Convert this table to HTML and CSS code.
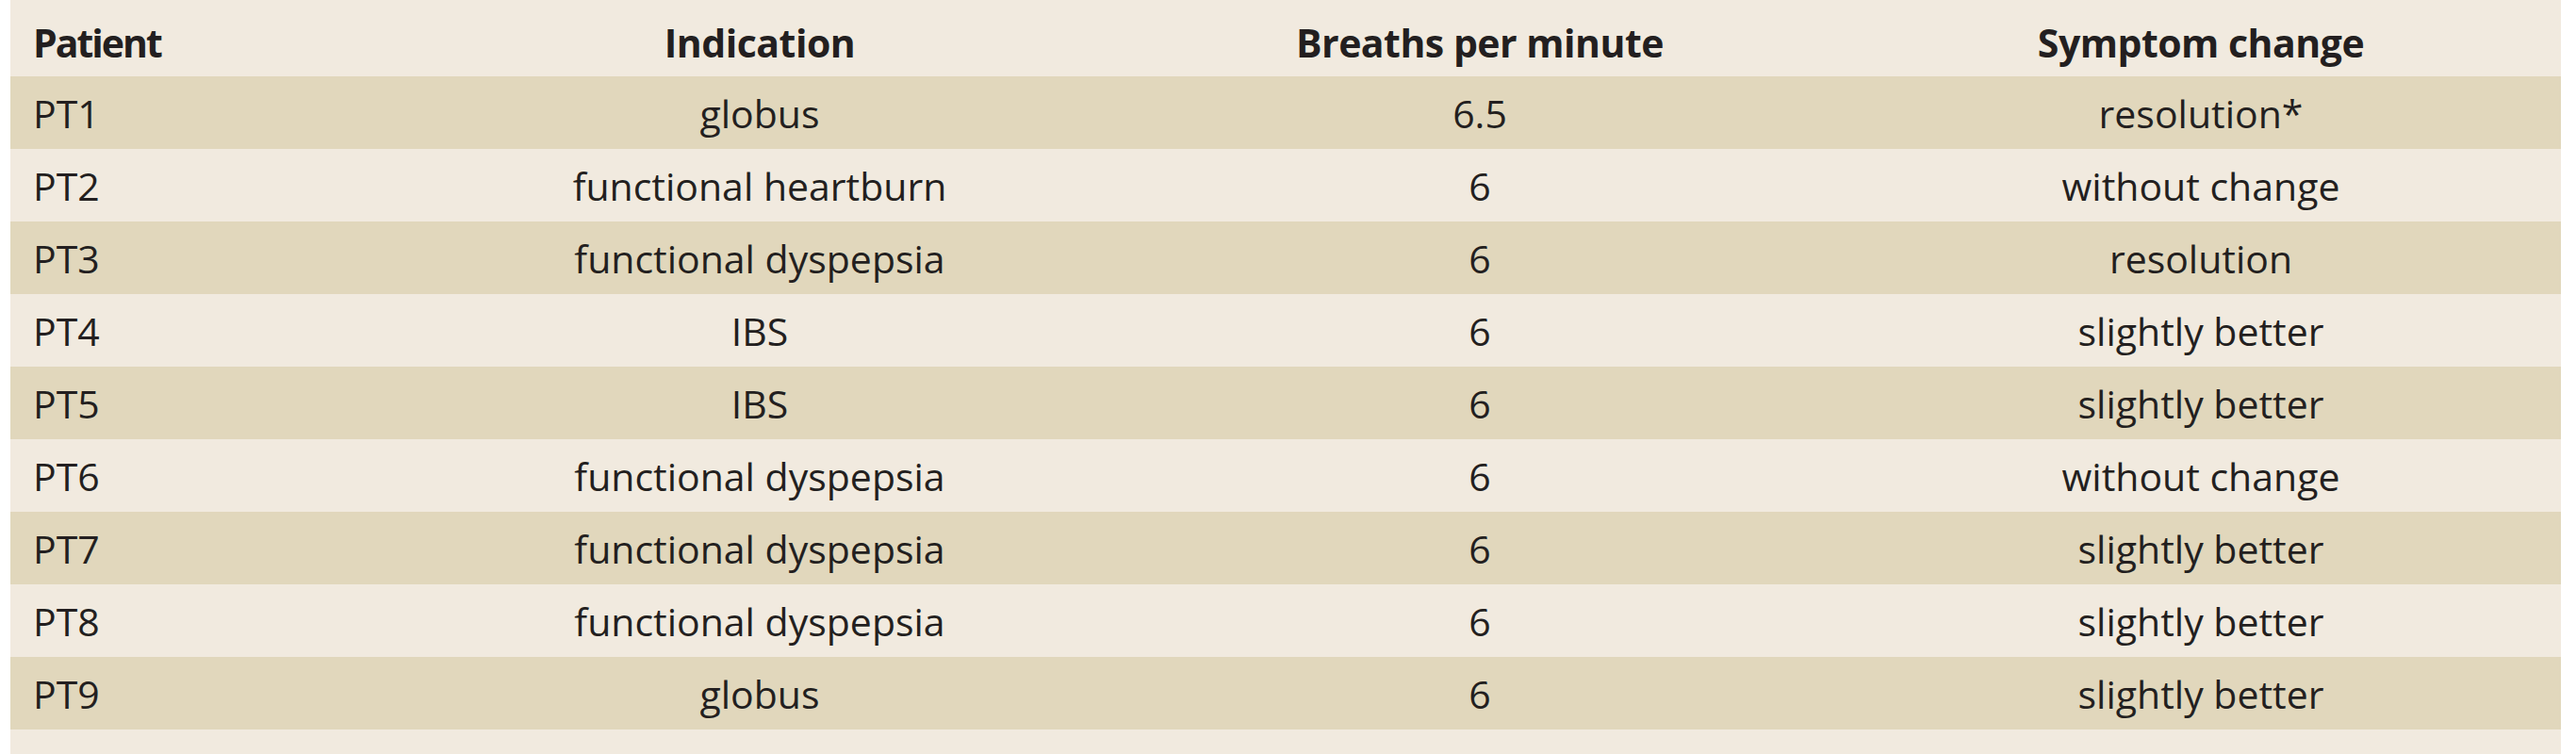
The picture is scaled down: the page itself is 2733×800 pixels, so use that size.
FILE: index.html
```html
<!DOCTYPE html>
<html lang="en">
<head>
<meta charset="utf-8">
<title>Breathing table</title>
<link rel="stylesheet" href="styles.css">
</head>
<body>
<div class="sheet">
  <table class="data">
    <colgroup>
      <col class="c-patient">
      <col class="c-ind">
      <col class="c-bpm">
      <col class="c-sym">
    </colgroup>
    <thead>
      <tr>
        <th class="left">Patient</th>
        <th>Indication</th>
        <th>Breaths per minute</th>
        <th>Symptom change</th>
      </tr>
    </thead>
    <tbody>
      <tr class="shade"><td class="left">PT1</td><td>globus</td><td>6.5</td><td>resolution*</td></tr>
      <tr><td class="left">PT2</td><td>functional heartburn</td><td>6</td><td>without change</td></tr>
      <tr class="shade"><td class="left">PT3</td><td>functional dyspepsia</td><td>6</td><td>resolution</td></tr>
      <tr><td class="left">PT4</td><td>IBS</td><td>6</td><td>slightly better</td></tr>
      <tr class="shade"><td class="left">PT5</td><td>IBS</td><td>6</td><td>slightly better</td></tr>
      <tr><td class="left">PT6</td><td>functional dyspepsia</td><td>6</td><td>without change</td></tr>
      <tr class="shade"><td class="left">PT7</td><td>functional dyspepsia</td><td>6</td><td>slightly better</td></tr>
      <tr><td class="left">PT8</td><td>functional dyspepsia</td><td>6</td><td>slightly better</td></tr>
      <tr class="shade"><td class="left">PT9</td><td>globus</td><td>6</td><td>slightly better</td></tr>
    </tbody>
  </table>
  <div class="tail"></div>
</div>
</body>
</html>
```
FILE: styles.css
```css
html, body {
  margin: 0;
  padding: 0;
  background: #ffffff;
}

body {
  font-family: "Open Sans", "Noto Sans", sans-serif;
  color: #231f20;
}

.sheet {
  margin-left: 11px;
  width: 2706px;
  background: #f1eadf;
}

.data {
  width: 100%;
  border-collapse: collapse;
  table-layout: fixed;
}

.c-patient { width: 414px; }
.c-ind { width: 762px; }
.c-bpm { width: 766px; }
.c-sym { width: 764px; }

.data th,
.data td {
  padding: 0;
  text-align: center;
  font-size: 41px;
  white-space: nowrap;
}

.data th {
  height: 81px;
  font-weight: 700;
  vertical-align: middle;
  padding-top: 8px;
  box-sizing: border-box;
  letter-spacing: -0.5px;
}

.data th.left {
  letter-spacing: -2px;
}

.data td {
  height: 77px;
  font-weight: 400;
  vertical-align: middle;
}

.data .left {
  text-align: left;
  padding-left: 24px;
}

.data tr.shade td {
  background: #e1d7bc;
}

.tail {
  height: 26px;
}
```
